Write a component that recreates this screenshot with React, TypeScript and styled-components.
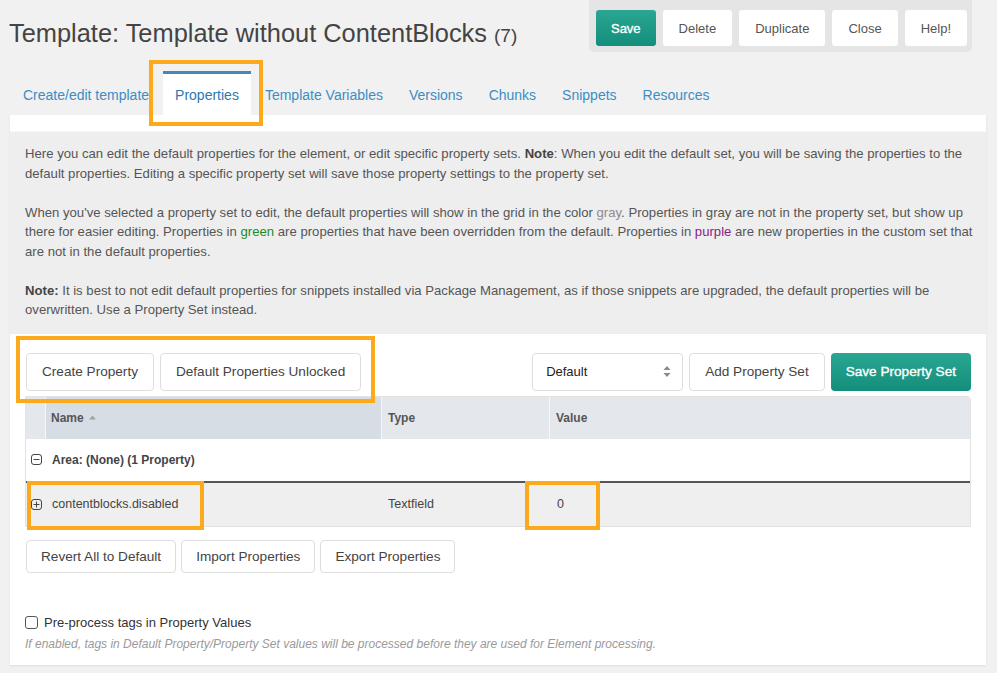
import React from "react";
import styled, { createGlobalStyle, css } from "styled-components";

const GlobalStyle = createGlobalStyle`
  html, body { margin: 0; padding: 0; }
  body {
    background: #f1f1f1;
    font-family: "Liberation Sans", Arial, Helvetica, sans-serif;
    color: #555;
    width: 997px;
    height: 673px;
    overflow: hidden;
  }
  * { box-sizing: border-box; }
`;

const Page = styled.div`
  display: flex;
  flex-direction: column;
  height: 673px;
`;

const Header = styled.header`
  display: flex;
  justify-content: space-between;
  align-items: flex-start;
  padding: 0 25px 0 9px;
`;

const Title = styled.h1`
  margin: 18px 0 0;
  font-size: 25.4px;
  font-weight: normal;
  line-height: 30px;
  color: #444;
`;

const Count = styled.span`
  font-size: 19px;
`;

const ActionBar = styled.div`
  display: flex;
  gap: 7px;
  padding: 10px 5px 6px 7px;
  background: #e5e5e5;
  border-radius: 0 0 5px 5px;
`;

const semiBold = css`
  font-weight: normal;
  -webkit-text-stroke: 0.35px #fff;
`;

const ActionButton = styled.button<{ $primary?: boolean }>`
  height: 36px;
  padding: 0 16px;
  border: 0;
  border-radius: 3px;
  font-family: inherit;
  font-size: 13px;
  background: #fff;
  color: #555;
  ${(p) =>
    p.$primary &&
    css`
      background: linear-gradient(#29a792, #138e7c);
      color: #fff;
      padding: 0 15px;
      ${semiBold}
    `}
`;

const TabBar = styled.nav`
  display: flex;
  align-items: flex-end;
  gap: 2px;
  margin: 19px 0 0 11px;
  height: 44px;
`;

const Tab = styled.div<{ $active?: boolean }>`
  position: relative;
  height: 44px;
  padding: 3px 12px 0;
  display: flex;
  align-items: center;
  font-size: 14px;
  color: #3c8dc3;
  ${(p) =>
    p.$active &&
    css`
      background: #fff;
      border-top: 3px solid #3f89bd;
      padding-top: 0;
      color: #2f78ae;
    `}
`;

const Highlight = styled.span<{ $t: number; $r: number; $b: number; $l: number }>`
  position: absolute;
  top: ${(p) => p.$t}px;
  right: ${(p) => p.$r}px;
  bottom: ${(p) => p.$b}px;
  left: ${(p) => p.$l}px;
  border: 4px solid #fcaa1b;
  pointer-events: none;
  z-index: 3;
`;

const Panel = styled.section`
  background: #fff;
  margin: 0 11px 0 10px;
  padding: 16px 0 14px;
  box-shadow: 0 1px 2px rgba(0, 0, 0, 0.08);
`;

const Description = styled.div`
  background: #eeeeee;
  border-top: 1px solid #f7f7f7;
  padding: 12px 12px 14px 15px;
  font-size: 13.15px;
  line-height: 19.5px;
  color: #555;
  p { margin: 0 0 19.5px; }
  p:last-child { margin: 0; }
  b { color: #444; }
`;

const Colored = styled.span<{ $c: string }>`
  color: ${(p) => p.$c};
`;

const Toolbar = styled.div`
  display: flex;
  justify-content: space-between;
  align-items: center;
  padding: 19px 15px 0 16px;
`;

const ButtonGroup = styled.div`
  position: relative;
  display: flex;
  gap: 6px;
`;

const Button = styled.button<{ $primary?: boolean; $small?: boolean }>`
  height: ${(p) => (p.$small ? 33 : 38)}px;
  padding: 0 ${(p) => (p.$small ? 14 : 15)}px;
  border: 1px solid #dedede;
  border-radius: 4px;
  background: #fff;
  font-family: inherit;
  font-size: 13.6px;
  color: #444;
  ${(p) =>
    p.$primary &&
    css`
      border: 0;
      background: linear-gradient(#29a792, #138e7c);
      color: #fff;
      ${semiBold}
    `}
`;

const SelectBox = styled.div`
  width: 151px;
  height: 38px;
  display: flex;
  align-items: center;
  justify-content: space-between;
  padding: 0 11px 0 13px;
  border: 1px solid #dedede;
  border-radius: 4px;
  background: #fff;
  font-size: 13px;
  color: #222;
`;

const Grid = styled.div`
  margin: 5px 15px 0;
  border: 1px solid #e2e2e2;
  border-radius: 0 4px 0 0;
`;

const columns = "19px 336px 168px 1fr";

const HeaderRow = styled.div`
  display: grid;
  grid-template-columns: ${columns};
  height: 42px;
  background: #e4e8ec;
`;

const HeaderCell = styled.div<{ $sorted?: boolean; $first?: boolean }>`
  display: flex;
  align-items: center;
  padding-left: ${(p) => (p.$sorted ? 5 : 6)}px;
  font-size: 12px;
  font-weight: bold;
  color: #555;
  border-left: ${(p) => (p.$first ? "0" : "1px solid #f6f7f9")};
  background: ${(p) => (p.$sorted ? "#d6dde4" : "transparent")};
`;

const GroupRow = styled.div`
  display: flex;
  align-items: center;
  gap: 10px;
  height: 44px;
  padding-left: 5px;
  background: #fff;
  border-bottom: 2px solid #555;
  font-size: 12px;
  font-weight: bold;
  color: #444;
`;

const DataRow = styled.div`
  position: relative;
  display: grid;
  grid-template-columns: ${columns};
  height: 43px;
  background: #efefef;
  font-size: 12.5px;
  color: #444;
`;

const Cell = styled.div<{ $pad: number }>`
  display: flex;
  align-items: center;
  padding-left: ${(p) => p.$pad}px;
  white-space: nowrap;
`;

const BottomBar = styled.div`
  display: flex;
  gap: 5px;
  padding: 13px 16px 0;
`;

const CheckLabel = styled.label`
  display: flex;
  align-items: center;
  gap: 6px;
  margin: 42px 0 0 15px;
  font-size: 13px;
  color: #333;
  line-height: 16px;
`;

const CheckInput = styled.input`
  appearance: none;
  margin: 0;
  width: 13px;
  height: 13px;
  border: 1px solid #555;
  border-radius: 3px;
  background: #fff;
`;

const Hint = styled.div`
  margin: 6px 0 0 15px;
  font-size: 12px;
  line-height: 14px;
  font-style: italic;
  color: #9a9a9a;
`;

const ToggleIcon = ({ plus }: { plus?: boolean }) => (
  <svg width="11" height="11" viewBox="0 0 11 11" fill="none" stroke="#444" strokeWidth="1">
    <rect x="0.5" y="0.5" width="10" height="10" rx="2.5" />
    <line x1="2.5" y1="5.5" x2="8.5" y2="5.5" />
    {plus && <line x1="5.5" y1="2.5" x2="5.5" y2="8.5" />}
  </svg>
);

const SortUp = () => (
  <svg width="7" height="5" viewBox="0 0 7 5" style={{ marginLeft: 5 }}>
    <path d="M0 4.5 L3.5 0.5 L7 4.5 Z" fill="#a0a4a8" />
  </svg>
);

const UpDown = () => (
  <svg width="8" height="13" viewBox="0 0 8 13">
    <path d="M0.5 5 L4 1 L7.5 5 Z" fill="#8a8a8a" />
    <path d="M0.5 8 L4 12 L7.5 8 Z" fill="#8a8a8a" />
  </svg>
);

export default function App() {
  return (
    <>
      <GlobalStyle />
      <Page>
        <Header>
          <Title>
            Template: Template without ContentBlocks <Count>(7)</Count>
          </Title>
          <ActionBar>
            <ActionButton $primary>Save</ActionButton>
            <ActionButton>Delete</ActionButton>
            <ActionButton>Duplicate</ActionButton>
            <ActionButton>Close</ActionButton>
            <ActionButton>Help!</ActionButton>
          </ActionBar>
        </Header>

        <TabBar>
          <Tab>Create/edit template</Tab>
          <Tab $active>
            Properties
            <Highlight $t={-14} $r={-12} $b={-11} $l={-14} />
          </Tab>
          <Tab>Template Variables</Tab>
          <Tab>Versions</Tab>
          <Tab>Chunks</Tab>
          <Tab>Snippets</Tab>
          <Tab>Resources</Tab>
        </TabBar>

        <Panel>
          <Description>
            <p>
              Here you can edit the default properties for the element, or edit specific property sets.{" "}
              <b>Note</b>: When you edit the default set, you will be saving the properties to the default
              properties. Editing a specific property set will save those property settings to the property set.
            </p>
            <p>
              When you've selected a property set to edit, the default properties will show in the grid in the
              color <Colored $c="#8c8c8c">gray</Colored>. Properties in gray are not in the property set, but
              show up there for easier editing. Properties in <Colored $c="#1f8a1f">green</Colored> are
              properties that have been overridden from the default. Properties in{" "}
              <Colored $c="#8a1a8a">purple</Colored> are new properties in the custom set that are not in the
              default properties.
            </p>
            <p>
              <b>Note:</b> It is best to not edit default properties for snippets installed via Package
              Management, as if those snippets are upgraded, the default properties will be overwritten. Use a
              Property Set instead.
            </p>
          </Description>

          <Toolbar>
            <ButtonGroup>
              <Button>Create Property</Button>
              <Button>Default Properties Unlocked</Button>
              <Highlight $t={-17} $r={-14} $b={-12} $l={-10} />
            </ButtonGroup>
            <ButtonGroup>
              <SelectBox>
                <span>Default</span>
                <UpDown />
              </SelectBox>
              <Button>Add Property Set</Button>
              <Button $primary>Save Property Set</Button>
            </ButtonGroup>
          </Toolbar>

          <Grid>
            <HeaderRow>
              <HeaderCell $first />
              <HeaderCell $sorted>
                Name
                <SortUp />
              </HeaderCell>
              <HeaderCell>Type</HeaderCell>
              <HeaderCell>Value</HeaderCell>
            </HeaderRow>
            <GroupRow>
              <ToggleIcon />
              <span>Area: (None) (1 Property)</span>
            </GroupRow>
            <DataRow>
              <Cell $pad={5}>
                <ToggleIcon plus />
              </Cell>
              <Cell $pad={7}>contentblocks.disabled</Cell>
              <Cell $pad={7}>Textfield</Cell>
              <Cell $pad={8}>0</Cell>
              <Highlight $t={-2} $r={766} $b={-4} $l={1} />
              <Highlight $t={-2} $r={370} $b={-4} $l={499} />
            </DataRow>
          </Grid>

          <BottomBar>
            <Button $small>Revert All to Default</Button>
            <Button $small>Import Properties</Button>
            <Button $small>Export Properties</Button>
          </BottomBar>

          <CheckLabel>
            <CheckInput type="checkbox" />
            Pre-process tags in Property Values
          </CheckLabel>
          <Hint>
            If enabled, tags in Default Property/Property Set values will be processed before they are used for
            Element processing.
          </Hint>
        </Panel>
      </Page>
    </>
  );
}
